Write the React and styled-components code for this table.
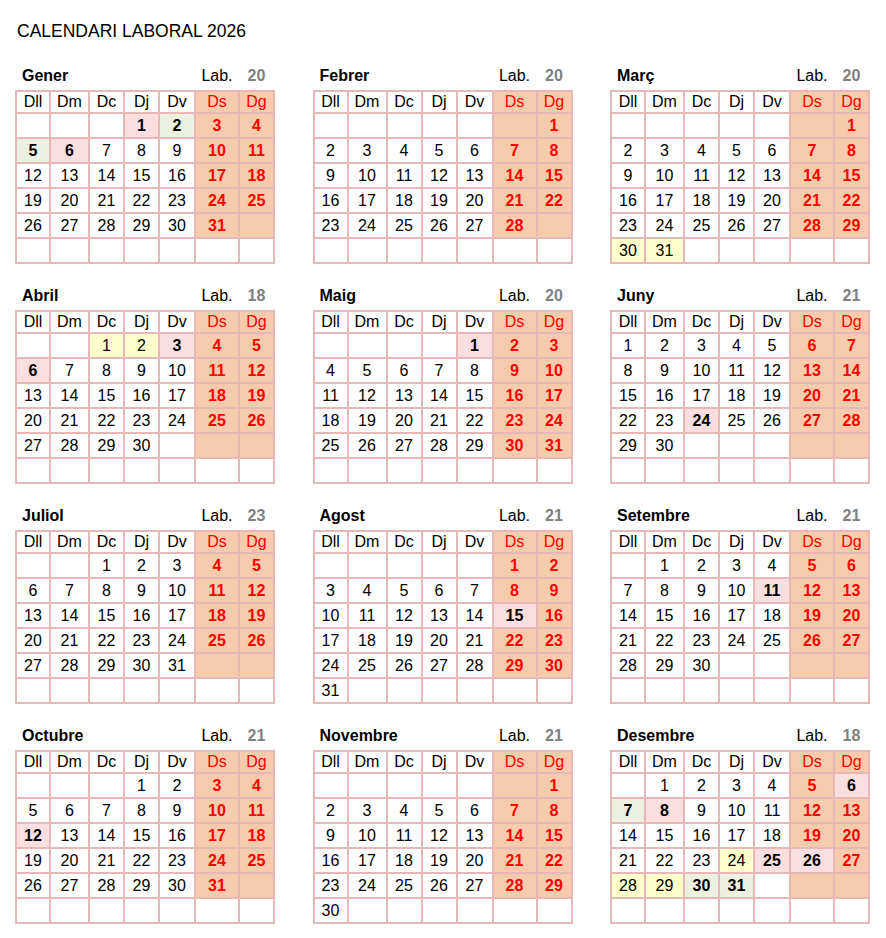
import React from 'react'
import styled, { createGlobalStyle } from 'styled-components'

const GlobalStyle = createGlobalStyle`
  body {
    margin: 0;
    background: #fff;
    font-family: "Liberation Sans", Arial, sans-serif;
    color: #000;
  }
`

const COLS = '32px 37px 33px 33px 34px 42px 33px'

const Page = styled.main`
  padding: 21px 0 0 15px;
`

const Title = styled.h1`
  margin: 0 0 22px 2px;
  font-size: 17.5px;
  font-weight: normal;
  line-height: 21px;
`

const Months = styled.div`
  display: grid;
  grid-template-columns: repeat(3, 260px);
  column-gap: 37.5px;
  row-gap: 20px;
`

const Month = styled.section`
  display: flex;
  flex-direction: column;
  gap: 2px;
`

const MonthHead = styled.div`
  display: grid;
  grid-template-columns: ${COLS};
  column-gap: 2px;
  padding: 0 2px;
  height: 24px;
  align-items: center;
  font-size: 16px;
`

const MonthName = styled.span`
  grid-column: span 5;
  padding-left: 5px;
  font-weight: bold;
`

const Lab = styled.span`
  text-align: center;
`

const LabCount = styled.span`
  text-align: center;
  font-weight: bold;
  color: #808080;
`

const Table = styled.div`
  display: grid;
  grid-template-columns: ${COLS};
  grid-template-rows: 20px repeat(6, 23px);
  gap: 2px;
  padding: 2px;
  background: #e6b8b7;
  width: max-content;
`

const fills = {
  weekend: '#f8cbad',
  holiday: '#fbdfe0',
  bridge: '#ebf1de',
  half: '#ffffcc',
  none: '#ffffff',
}

const Cell = styled.div`
  display: flex;
  align-items: center;
  justify-content: center;
  font-size: 16px;
  background: ${(p) => fills[p.$fill]};
  color: ${(p) => (p.$red ? '#ff0000' : '#000')};
  font-weight: ${(p) => (p.$bold ? 'bold' : 'normal')};
`

const DAYS = ['Dll', 'Dm', 'Dc', 'Dj', 'Dv', 'Ds', 'Dg']

const MONTHS = [
  { name: 'Gener', lab: 20, marks: { 1: 'holiday', 2: 'bridge', 5: 'bridge', 6: 'holiday' } },
  { name: 'Febrer', lab: 20, marks: {} },
  { name: 'Març', lab: 20, marks: { 30: 'half', 31: 'half' } },
  { name: 'Abril', lab: 18, marks: { 1: 'half', 2: 'half', 3: 'holiday', 6: 'holiday' } },
  { name: 'Maig', lab: 20, marks: { 1: 'holiday' } },
  { name: 'Juny', lab: 21, marks: { 24: 'holiday' } },
  { name: 'Juliol', lab: 23, marks: {} },
  { name: 'Agost', lab: 21, marks: { 15: 'holiday' } },
  { name: 'Setembre', lab: 21, marks: { 11: 'holiday' } },
  { name: 'Octubre', lab: 21, marks: { 12: 'holiday' } },
  { name: 'Novembre', lab: 21, marks: {} },
  {
    name: 'Desembre',
    lab: 18,
    marks: {
      6: 'holiday', 7: 'bridge', 8: 'holiday', 24: 'half', 25: 'holiday',
      26: 'holiday', 28: 'half', 29: 'half', 30: 'bridge', 31: 'bridge',
    },
  },
]

// six weeks of seven slots, Monday first
const weeks = (month) => {
  const offset = (new Date(2026, month, 1).getDay() + 6) % 7
  const count = new Date(2026, month + 1, 0).getDate()
  return Array.from({ length: 42 }, (_, i) => {
    const d = i - offset + 1
    return d >= 1 && d <= count ? d : null
  })
}

const dayCell = (day, i, marks) => {
  const row = Math.floor(i / 7)
  const weekend = i % 7 >= 5
  const mark = day && marks[day]

  if (mark) {
    return (
      <Cell key={i} $fill={mark} $bold={mark !== 'half'}>
        {day}
      </Cell>
    )
  }
  const shaded = weekend && row < 5
  return (
    <Cell key={i} $fill={shaded ? 'weekend' : 'none'} $red={weekend} $bold={weekend}>
      {day}
    </Cell>
  )
}

const MonthTable = ({ index, name, lab, marks }) => (
  <Month>
    <MonthHead>
      <MonthName>{name}</MonthName>
      <Lab>Lab.</Lab>
      <LabCount>{lab}</LabCount>
    </MonthHead>
    <Table>
      {DAYS.map((d, i) => (
        <Cell key={d} $fill={i >= 5 ? 'weekend' : 'none'} $red={i >= 5}>
          {d}
        </Cell>
      ))}
      {weeks(index).map((day, i) => dayCell(day, i, marks))}
    </Table>
  </Month>
)

const App = () => (
  <>
    <GlobalStyle />
    <Page>
      <Title>CALENDARI LABORAL 2026</Title>
      <Months>
        {MONTHS.map((m, i) => (
          <MonthTable key={m.name} index={i} {...m} />
        ))}
      </Months>
    </Page>
  </>
)

export default App
